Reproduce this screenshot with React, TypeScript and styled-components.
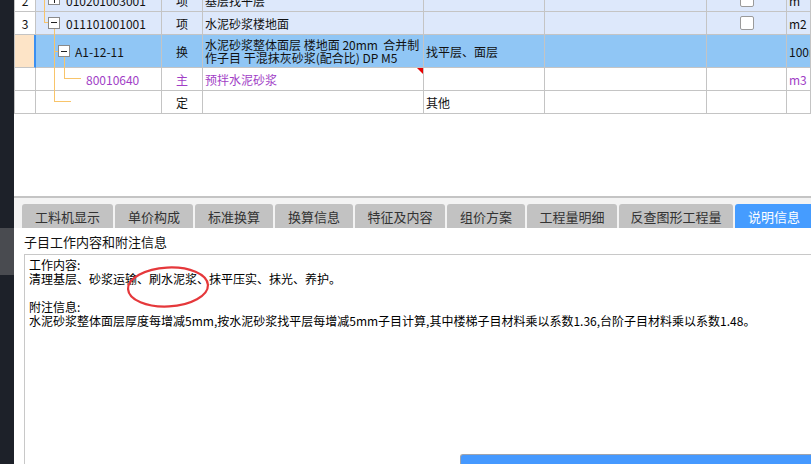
import React from "react";
import styled, { createGlobalStyle } from "styled-components";

const GlobalStyle = createGlobalStyle`
  html, body { margin: 0; padding: 0; background: #ffffff; }
  body { font-family: "Noto Sans CJK SC", "Noto Sans", sans-serif; }
  * { box-sizing: border-box; }
`;

const Root = styled.div`
  position: relative;
  display: flex;
  width: 811px;
  height: 464px;
  overflow: hidden;
  background: #ffffff;
`;

const Sidebar = styled.div`
  width: 14px;
  flex: none;
  display: flex;
  flex-direction: column;
  background: #1d2129;
`;

const SidebarBlock = styled.div`
  margin-top: 228px;
  height: 47px;
  background: #494b50;
`;

const Main = styled.div`
  position: relative;
  flex: 1;
  min-width: 0;
  display: flex;
  flex-direction: column;
`;

const Grid = styled.div`
  margin-top: -11px;
  display: grid;
  grid-template-columns: 21px 126px 41px 221px 121px 162px 80px 1fr;
  border-left: 1px solid #c4c4c4;
  font-size: 12px;
  color: #000;
`;

type Tone = "light" | "selected" | "plain";

const bgFor = (t: Tone) =>
  t === "light" ? "#dde8fb" : t === "selected" ? "#90c6f5" : "#ffffff";

const Cell = styled.div<{
  $tone: Tone;
  $h: number;
  $pad?: number;
  $center?: boolean;
  $purple?: boolean;
}>`
  position: relative;
  height: ${(p) => p.$h}px;
  background: ${(p) => bgFor(p.$tone)};
  border-right: 1px solid #c4c4c4;
  border-bottom: 1px solid #c4c4c4;
  display: flex;
  align-items: center;
  justify-content: ${(p) => (p.$center ? "center" : "flex-start")};
  padding-left: ${(p) => (p.$center ? 0 : p.$pad ?? 2)}px;
  color: ${(p) => (p.$purple ? "#a13ec6" : "#111")};
  white-space: nowrap;
  overflow: hidden;
  line-height: 13px;
`;

const NumCell = styled(Cell)<{ $sel?: boolean }>`
  background: ${(p) => (p.$sel ? "#fde4c7" : "#ffffff")};
  border-right: ${(p) => (p.$sel ? "2px solid #3b8ff0" : "1px solid #c4c4c4")};
`;

const TwoLines = styled.div`
  white-space: pre;
  line-height: 13px;
`;

const Check = styled.span`
  width: 14px;
  height: 14px;
  background: #fff;
  border: 1px solid #9a9a9a;
  border-radius: 2px;
`;

const Flag = styled.span`
  position: absolute;
  top: 0;
  right: 0;
  width: 0;
  height: 0;
  border-top: 6px solid #e80000;
  border-left: 6px solid transparent;
`;

const TreeOverlay = styled.svg`
  position: absolute;
  left: 0;
  top: 0;
  width: 80px;
  height: 120px;
  pointer-events: none;
`;

const Blank = styled.div`
  height: 82px;
  flex: none;
  background: #ffffff;
`;

const Divider = styled.div`
  height: 2px;
  flex: none;
  background: #c4c4c4;
`;

const TabBar = styled.div`
  height: 30px;
  flex: none;
  display: flex;
  align-items: flex-end;
  gap: 2px;
  padding-left: 8px;
  background: #f3f3f3;
`;

const Tab = styled.div<{ $active?: boolean; $w: number }>`
  flex: none;
  width: ${(p) => p.$w}px;
  height: 24px;
  display: flex;
  align-items: center;
  justify-content: center;
  border-radius: 3px 3px 0 0;
  font-size: 13px;
  color: ${(p) => (p.$active ? "#ffffff" : "#333333")};
  background: ${(p) => (p.$active ? "#459cff" : "#c2c2c2")};
`;

const Title = styled.div`
  height: 26px;
  flex: none;
  padding: 2px 0 0 10px;
  line-height: 24px;
  font-size: 13px;
  color: #111;
`;

const TextBox = styled.div`
  position: relative;
  flex: 1;
  margin: 0 -3px -3px 10px;
  border: 1px solid #c8c8c8;
  padding: 3px 4px;
  font-size: 12px;
  line-height: 14px;
  color: #000;
`;

const Line = styled.div`
  height: 14px;
  white-space: pre;
`;

const Circle = styled.svg`
  position: absolute;
  left: 99px;
  top: 8px;
  width: 88px;
  height: 48px;
  pointer-events: none;
`;

const Popup = styled.div`
  position: absolute;
  left: 460px;
  top: 454px;
  right: -4px;
  height: 20px;
  background: #4599ff;
  border-top: 1px solid #a0a4ad;
  border-left: 1px solid #a0a4ad;
  border-top-left-radius: 3px;
`;

const tabs: { label: string; w: number; active?: boolean }[] = [
  { label: "工料机显示", w: 91 },
  { label: "单价构成", w: 78 },
  { label: "标准换算", w: 78 },
  { label: "换算信息", w: 78 },
  { label: "特征及内容", w: 90 },
  { label: "组价方案", w: 78 },
  { label: "工程量明细", w: 90 },
  { label: "反查图形工程量", w: 114 },
  { label: "说明信息", w: 78, active: true },
];

const orange = "#f8c46a";

function Tree() {
  return (
    <TreeOverlay viewBox="0 0 80 120">
      <g shapeRendering="crispEdges" fill="none">
        <line x1="30.5" y1="0" x2="30.5" y2="23" stroke={orange} />
        <line x1="30" y1="22.5" x2="34" y2="22.5" stroke={orange} />
        <line x1="40.5" y1="29" x2="40.5" y2="101.5" stroke={orange} />
        <line x1="40" y1="51.5" x2="44" y2="51.5" stroke={orange} />
        <line x1="40" y1="101.5" x2="57" y2="101.5" stroke={orange} />
        <line x1="50.5" y1="57" x2="50.5" y2="78.5" stroke={orange} />
        <line x1="50" y1="78.5" x2="67" y2="78.5" stroke={orange} />
        {/* row 2 box (plus) */}
        <rect x="34.5" y="-6.5" width="11" height="11" fill="#fff" stroke="#8a8a8a" />
        <line x1="40.5" y1="-4" x2="40.5" y2="2.5" stroke="#222" />
        {/* row 3 box (minus) */}
        <rect x="34.5" y="17.5" width="11" height="11" fill="#fff" stroke="#8a8a8a" />
        <line x1="37" y1="22.5" x2="43" y2="22.5" stroke="#222" />
        {/* A1 box (minus) */}
        <rect x="44.5" y="45.5" width="11" height="11" fill="#fff" stroke="#8a8a8a" />
        <line x1="47" y1="51.5" x2="53" y2="51.5" stroke="#222" />
      </g>
    </TreeOverlay>
  );
}

export default function App() {
  return (
    <>
      <GlobalStyle />
      <Root>
        <Sidebar>
          <SidebarBlock />
        </Sidebar>
        <Main>
          <Grid>
            {/* row 2 (partially visible) */}
            <NumCell $tone="plain" $h={23} $center>2</NumCell>
            <Cell $tone="light" $h={23} $pad={30}>010201003001</Cell>
            <Cell $tone="light" $h={23} $center>项</Cell>
            <Cell $tone="light" $h={23}>基层找平层</Cell>
            <Cell $tone="light" $h={23} />
            <Cell $tone="light" $h={23} />
            <Cell $tone="light" $h={23} $center><Check /></Cell>
            <Cell $tone="light" $h={23}>m</Cell>

            {/* row 3 */}
            <NumCell $tone="plain" $h={23} $center>3</NumCell>
            <Cell $tone="light" $h={23} $pad={30}>011101001001</Cell>
            <Cell $tone="light" $h={23} $center>项</Cell>
            <Cell $tone="light" $h={23}>水泥砂浆楼地面</Cell>
            <Cell $tone="light" $h={23} />
            <Cell $tone="light" $h={23} />
            <Cell $tone="light" $h={23} $center><Check /></Cell>
            <Cell $tone="light" $h={23}>m2</Cell>

            {/* selected row */}
            <NumCell $tone="plain" $h={33} $center $sel />
            <Cell $tone="selected" $h={33} $pad={39}>A1-12-11</Cell>
            <Cell $tone="selected" $h={33} $center>换</Cell>
            <Cell $tone="selected" $h={33}>
              <TwoLines>{"水泥砂浆整体面层 楼地面 20mm  合并制\n作子目 干混抹灰砂浆(配合比) DP M5"}</TwoLines>
            </Cell>
            <Cell $tone="selected" $h={33}>找平层、面层</Cell>
            <Cell $tone="selected" $h={33} />
            <Cell $tone="selected" $h={33} />
            <Cell $tone="selected" $h={33}>100m2</Cell>

            {/* material row */}
            <NumCell $tone="plain" $h={23} $center />
            <Cell $tone="plain" $h={23} $pad={50} $purple>80010640</Cell>
            <Cell $tone="plain" $h={23} $center $purple>主</Cell>
            <Cell $tone="plain" $h={23} $purple>
              预拌水泥砂浆
              <Flag />
            </Cell>
            <Cell $tone="plain" $h={23} />
            <Cell $tone="plain" $h={23} />
            <Cell $tone="plain" $h={23} />
            <Cell $tone="plain" $h={23} $purple>m3</Cell>

            {/* 定 row */}
            <NumCell $tone="plain" $h={23} $center />
            <Cell $tone="plain" $h={23} />
            <Cell $tone="plain" $h={23} $center>定</Cell>
            <Cell $tone="plain" $h={23} />
            <Cell $tone="plain" $h={23}>其他</Cell>
            <Cell $tone="plain" $h={23} />
            <Cell $tone="plain" $h={23} />
            <Cell $tone="plain" $h={23} />
          </Grid>
          <Tree />
          <Blank />
          <Divider />
          <TabBar>
            {tabs.map((t) => (
              <Tab key={t.label} $w={t.w} $active={t.active}>
                {t.label}
              </Tab>
            ))}
          </TabBar>
          <Title>子目工作内容和附注信息</Title>
          <TextBox>
            <Line>工作内容:</Line>
            <Line>清理基层、砂浆运输、刷水泥浆、抹平压实、抹光、养护。</Line>
            <Line> </Line>
            <Line>附注信息:</Line>
            <Line>水泥砂浆整体面层厚度每增减5mm,按水泥砂浆找平层每增减5mm子目计算,其中楼梯子目材料乘以系数1.36,台阶子目材料乘以系数1.48。</Line>
            <Circle viewBox="0 0 88 48">
              <ellipse
                cx="44"
                cy="24"
                rx="40"
                ry="19.5"
                fill="none"
                stroke="#e5383b"
                strokeWidth="2.2"
                transform="rotate(-3 44 24)"
              />
            </Circle>
          </TextBox>
        </Main>
        <Popup />
      </Root>
    </>
  );
}
